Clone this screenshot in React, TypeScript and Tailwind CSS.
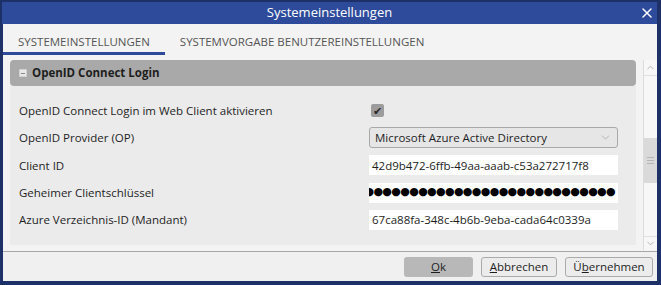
import { ChevronDown, ChevronUp, X } from 'lucide-react';

const font = { fontFamily: '"Open Sans", "Noto Sans", sans-serif' };

function Row({ label, children }: { label: string; children: React.ReactNode }) {
  return (
    <div className="flex items-center h-[27.3px]">
      <div className="w-[350px] text-[11.5px] text-[#1e1e1e]">{label}</div>
      <div className="w-[249px] flex items-center">{children}</div>
    </div>
  );
}

function TextField({ value }: { value: string }) {
  return (
    <div className="w-full h-[20px] bg-white flex items-center px-[3px] text-[11.5px] text-[#1e1e1e] overflow-hidden whitespace-nowrap">
      {value}
    </div>
  );
}

export default function App() {
  return (
    <div className="w-[661px] h-[285px] bg-[#1e3068] p-[2px] pr-[4px] pb-[4px] flex flex-col" style={font}>
      {/* title bar */}
      <div className="h-[22px] bg-[#2e4b9b] flex items-center relative shrink-0">
        <div className="flex-1 text-center text-white text-[13px]">Systemeinstellungen</div>
        <X className="absolute right-[2px] top-[3px] w-[16px] h-[16px] text-white" strokeWidth={2.2} />
      </div>

      <div className="flex-1 flex flex-col bg-[#f3f3f3] ml-[1px]">
        {/* tabs */}
        <div className="h-[31px] flex items-end shrink-0">
          <div className="px-[15px] pb-[2px] border-b-[3px] border-[#2e4b9b] text-[11.5px] text-[#555]">SYSTEMEINSTELLUNGEN</div>
          <div className="px-[15px] pb-[5px] text-[11.5px] text-[#555]">SYSTEMVORGABE BENUTZEREINSTELLUNGEN</div>
        </div>

        <div className="flex pt-[5px] pl-[7px] h-[196px]">
          {/* group */}
          <div className="w-[626px] flex flex-col">
            <div className="h-[26px] bg-[#a9a9a9] rounded-[4px] flex items-center pl-[9px] gap-[5px]">
              <div className="w-[8px] h-[8px] bg-[#e8e8e8] border border-[#d0d0d0] flex items-center justify-center">
                <div className="w-[4px] h-px bg-[#888]" />
              </div>
              <span className="text-[11.5px] font-bold text-[#1e1e1e]">OpenID Connect Login</span>
            </div>
            <div className="bg-[#ebebeb] pl-[9px] pt-[11px] h-[159px]">
              <Row label="OpenID Connect Login im Web Client aktivieren">
                <div className="ml-[2px] w-[13px] h-[13px] rounded-[2px] bg-[#9c9c9c] flex items-center justify-center text-[11px] leading-none text-[#2a2a2a]">✔</div>
              </Row>
              <Row label="OpenID Provider (OP)">
                <div className="w-full h-[21px] bg-[#e6e6e6] border border-[#a8a8a8] rounded-[3px] flex items-center justify-between pl-[5px] pr-[5px] text-[11.5px] text-[#1e1e1e]">
                  <span>Microsoft Azure Active Directory</span>
                  <ChevronDown className="w-[13px] h-[13px] text-[#aaa]" strokeWidth={1.5} />
                </div>
              </Row>
              <Row label="Client ID">
                <TextField value="42d9b472-6ffb-49aa-aaab-c53a272717f8" />
              </Row>
              <Row label="Geheimer Clientschlüssel">
                <div className="w-full h-[20px] bg-white flex items-center justify-end pr-[3px] overflow-hidden whitespace-nowrap text-[11px] tracking-[-0.65px] text-black" style={{ fontFamily: '"DejaVu Sans", sans-serif' }}>
                  {'●'.repeat(40)}
                </div>
              </Row>
              <Row label="Azure Verzeichnis-ID (Mandant)">
                <TextField value="67ca88fa-348c-4b6b-9eba-cada64c0339a" />
              </Row>
            </div>
          </div>

          {/* scrollbar */}
          <div className="ml-[7px] w-[14px] h-[190px] bg-[#f7f7f7] border-l border-[#dcdcdc] flex flex-col">
            <div className="h-[16px] flex items-center justify-center border-b border-[#e0e0e0]">
              <ChevronUp className="w-[11px] h-[11px] text-[#b0b0b0]" strokeWidth={2} />
            </div>
            <div className="h-[62px]" />
            <div className="h-[45px] bg-[#dadada] flex flex-col items-center justify-center gap-[2px]">
              <div className="w-[7px] h-px bg-[#b5b5b5]" />
              <div className="w-[7px] h-px bg-[#b5b5b5]" />
              <div className="w-[7px] h-px bg-[#b5b5b5]" />
            </div>
            <div className="flex-1" />
            <div className="h-[14px] flex items-center justify-center border-t border-[#e0e0e0]">
              <ChevronDown className="w-[11px] h-[11px] text-[#b0b0b0]" strokeWidth={2} />
            </div>
          </div>
        </div>

        {/* footer */}
        <div className="flex-1 border-t border-[#a8a8a8] bg-[#f0f0f0] flex items-center justify-end gap-[8px] pr-[4px]">
          <button className="w-[69px] h-[20px] rounded-[3px] bg-[#b8b8b8] text-[11.5px] text-[#1e1e1e]">
            <span className="underline">O</span>k
          </button>
          <button className="w-[76px] h-[20px] rounded-[3px] bg-[#ececec] border border-[#aaa] text-[11.5px] text-[#1e1e1e]">
            <span className="underline">A</span>bbrechen
          </button>
          <button className="w-[88px] h-[20px] rounded-[3px] bg-[#ececec] border border-[#aaa] text-[11.5px] text-[#1e1e1e]">
            Ü<span className="underline">b</span>ernehmen
          </button>
        </div>
      </div>
    </div>
  );
}
